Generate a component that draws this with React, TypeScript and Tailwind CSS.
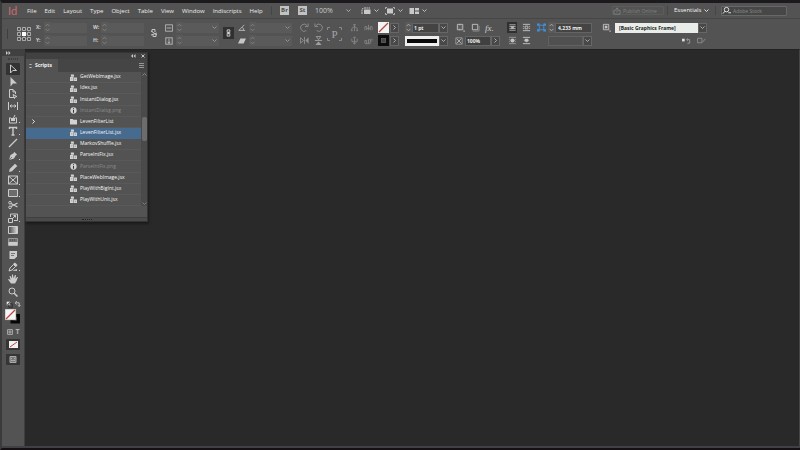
import React, { ReactNode } from "react";

const FONT = "font-['Open_Sans','Noto_Sans',sans-serif]";

function Icon({ children, className = "size-[10px]", box = "0 0 10 10" }: { children: ReactNode; className?: string; box?: string }) {
  return (
    <svg viewBox={box} className={"shrink-0 " + className} fill="none" stroke="currentColor" strokeWidth="1" aria-hidden="true">
      {children}
    </svg>
  );
}

function Chevron({ right = false, className = "size-[5px]" }: { right?: boolean; className?: string }) {
  return (
    <Icon box="0 0 5 5" className={className}>
      {right ? <path d="M1.500 .5l2 2-2 2" strokeWidth=".9" /> : <path d="M.5 1.500l2 2 2-2" strokeWidth=".9" />}
    </Icon>
  );
}

function Spinner({ bright = false }: { bright?: boolean }) {
  return (
    <span className={"flex h-[11px] w-[7px] shrink-0 items-center justify-center rounded-[1px] bg-[#5a5a5a] " + (bright ? "text-[#b0b0b0]" : "text-[#858585]")}>
      <Icon box="0 0 5 9" className="h-[9px] w-[5px]">
        <path d="M.5 3.200l2-2 2 2M.5 5.800l2 2 2-2" strokeWidth=".9" />
      </Icon>
    </span>
  );
}

function Field({ label, text }: { label: string; text: string }) {
  return (
    <label className="flex h-[11px] items-center">
      <span className="w-2 text-[5px] font-bold text-[#d0d0d0]">{text}</span>
      <Spinner />
      <input aria-label={label} className="h-[10px] w-[36px] bg-[#5a5a5a]" />
    </label>
  );
}

function Combo({ label, icon }: { label: string; icon: ReactNode }) {
  return (
    <div className="flex h-[11px] items-center">
      <span className="mr-[2px] flex w-[9px] text-[#c6c6c6]">{icon}</span>
      <Spinner />
      <input aria-label={label} className="h-[10px] w-[27px] bg-[#5a5a5a]" />
      <button aria-label={label + " presets"} className="flex h-[10px] w-[9px] items-center justify-center bg-[#5a5a5a] text-[#989898]">
        <Chevron />
      </button>
    </div>
  );
}

function DropButton({ label, right = false }: { label: string; right?: boolean }) {
  return (
    <button aria-label={label} className="flex h-[10px] w-[9px] shrink-0 items-center justify-center border border-[#676767] bg-[#484848] text-[#b8b8b8]">
      <Chevron right={right} />
    </button>
  );
}

function ToolButton({ label, children, className = "text-[#c4c4c4]" }: { label: string; children: ReactNode; className?: string }) {
  return (
    <button aria-label={label} className={"flex h-[11px] w-[10px] items-center justify-center " + className}>
      <Icon className="size-[9px]">{children}</Icon>
    </button>
  );
}

function Stack({ children, className }: { children: ReactNode; className: string }) {
  return <div className={"flex shrink-0 flex-col gap-[2px] " + className}>{children}</div>;
}

const menus = ["File", "Edit", "Layout", "Type", "Object", "Table", "View", "Window", "Indiscripts", "Help"];

function MenuBar() {
  return (
    <header className="flex h-4 items-center border-b border-[#464646] text-[6px] leading-[10px] text-[#ececec]">
      <span className="ml-[6px] w-[19px] shrink-0 font-['Lato',sans-serif] text-[11px] leading-[12px] text-[#d0696d]">Id</span>
      <nav className="flex w-[248px] shrink-0 gap-2">
        {menus.map((m) => (
          <button key={m} className="whitespace-nowrap">{m}</button>
        ))}
      </nav>
      <span className="-ml-1 h-[9px] w-px shrink-0 bg-[#454545]" />
      <button aria-label="Bridge" className="ml-2 h-[9px] w-[9px] shrink-0 bg-[#c2c2c2] text-[6px] font-bold leading-[9px] text-[#4c4c4c]">Br</button>
      <button aria-label="Stock" className="ml-[9px] h-[9px] w-[9px] shrink-0 bg-[#c2c2c2] text-[6px] font-bold leading-[9px] text-[#4c4c4c]">St</button>
      <div className="ml-2 flex w-[36px] shrink-0 items-center text-[#b5b5b5]">
        <select aria-label="Zoom level" className="w-[31px] appearance-none text-[7px] leading-[10px] text-[#cccccc]"><option>100%</option></select>
        <Chevron />
      </div>
      <div className="ml-[10px] flex shrink-0 items-center gap-[6px] text-[#c9c9c9]">
        <button aria-label="View options" className="flex items-center gap-[3px]">
          <Icon box="0 0 10 8" className="h-2 w-[10px]"><path d="M1 7V3l1-2M3 1h6" strokeDasharray="2 .5" /><path d="M3 2.500h6.500V7H3z" fill="currentColor" stroke="none" /></Icon>
          <Chevron />
        </button>
        <button aria-label="Screen mode" className="flex items-center gap-[3px]">
          <Icon box="0 0 10 8" className="h-2 w-[10px]"><path d="M2 1.500h6v5H2z" fill="currentColor" stroke="none" /><path d="M.5 2V.5H2M8 .5h1.500V2M.5 6v1.500H2M8 7.500h1.500V6" strokeWidth=".8" /></Icon>
          <Chevron />
        </button>
        <button aria-label="Arrange documents" className="flex items-center gap-[3px]">
          <Icon box="0 0 10 8" className="h-2 w-[10px]"><path d="M.5 1H5v6H.5zM6 1h4v2.500H6zM6 4.500h4V7H6z" fill="currentColor" stroke="none" /></Icon>
          <Chevron />
        </button>
      </div>
      <div className="ml-auto flex shrink-0 items-center">
        <button className="flex h-[9px] w-[52px] items-center gap-[2px] rounded-[1px] border border-[#5d5d5d] text-[#808080]">
          <Icon box="0 0 9 9" className="size-2"><path d="M3 4H1v4h7V4H6M4.500 6V1M2.500 3l2-2 2 2" /></Icon>
          <span className="whitespace-nowrap text-[5px]">Publish Online</span>
        </button>
        <span className="ml-[3px] h-[9px] w-px bg-[#454545]" />
        <div className="ml-[6px] flex w-[35px] items-center">
          <select aria-label="Workspace" className="w-[30px] appearance-none text-[6px] leading-[9px] text-[#f4f4f4]"><option>Essentials</option></select>
          <Chevron />
        </div>
        <span className="ml-[6px] h-[9px] w-px bg-[#454545]" />
        <label className="ml-[5px] mr-[13px] flex h-[10px] w-[66px] items-center gap-[2px] rounded-[1px] border border-[#686868] bg-[#474747]">
          <Icon className="size-[9px]"><circle cx="5" cy="4" r="2.500" /><path d="M3.300 5.800L1 8.500M7 7.500h3" /></Icon>
          <input aria-label="Search Adobe Stock" placeholder="Adobe Stock" className="w-[50px] text-[5px] leading-[8px] placeholder:text-[#8a8a8a]" />
        </label>
      </div>
    </header>
  );
}

function ControlBar() {
  return (
    <div className="flex h-[30px] items-start pt-[3px] text-[#c4c4c4]">
      <span className="ml-[5px] mt-[7px] h-[10px] w-px shrink-0 bg-[#3f3f3f]" />
      <button aria-label="Reference point" className="ml-[9px] mt-[5px] h-[14px] w-[14px] shrink-0">
        <Icon box="0 0 14 14" className="size-[14px]">
          <path d="M2.500 2.500h9v9h-9zM7 1v12M1 7h12" stroke="#8d8d8d" strokeDasharray="1 1" />
          <g stroke="#c0c0c0" strokeWidth=".8" fill="#505050">
            {[2, 7, 12].map((x) => [2, 7, 12].map((y) => <rect key={x + "-" + y} x={x - 1.4} y={y - 1.4} width="2.800" height="2.800" />))}
          </g>
          <path d="M5 5h4v4H5z" fill="#fff" stroke="none" />
        </Icon>
      </button>
      <Stack className="ml-[5px] w-[51px]">
        <Field label="X position" text="X:" />
        <Field label="Y position" text="Y:" />
      </Stack>
      <Stack className="ml-[6px] w-[51px]">
        <Field label="Width" text="W:" />
        <Field label="Height" text="H:" />
      </Stack>
      <button aria-label="Link dimensions" className="ml-[6px] mt-[5px] flex h-3 w-[8px] shrink-0 items-center justify-center">
        <Icon box="0 0 8 10" className="h-[10px] w-2"><path d="M2 4V1.500h3V4M3 6v2.500h3V6M1 3l6 4M1 7l6-2" /></Icon>
      </button>
      <Stack className="ml-[7px] w-[54px]">
        <Combo label="Scale X" icon={<Icon className="size-2"><path d="M.5 9V1h9v8M2 5h6M.5 9h9" /></Icon>} />
        <Combo label="Scale Y" icon={<Icon className="size-2"><path d="M.5 1h9M.5 9h9M1 1v8M9 1v8M5 2v6M3.500 6L5 8l1.500-2" /></Icon>} />
      </Stack>
      <button aria-label="Constrain scale" className="ml-[4px] mt-[5px] flex h-3 w-[11px] shrink-0 items-center justify-center bg-[#303030] text-[#d5d5d5]">
        <Icon box="0 0 5 9" className="h-2 w-[5px]"><path d="M1 1h3v3H1zM1 5h3v3H1zM2.500 3v3" /></Icon>
      </button>
      <Stack className="ml-[4px] w-[54px]">
        <Combo label="Rotation" icon={<Icon className="size-2"><path d="M8 1L1 8h8M5 4q2 1 2 4" /></Icon>} />
        <Combo label="Shear" icon={<Icon className="size-2"><path d="M3 2h7L7 8H0z" fill="currentColor" stroke="none" /></Icon>} />
      </Stack>
      <div className="ml-[7px] grid shrink-0 grid-cols-2 gap-x-[4px] gap-y-[2px]">
        <ToolButton label="Rotate clockwise" className="text-[#909090]"><path d="M7 8.500A4 4 0 1 1 8 3M9 .5V4H5.500" /></ToolButton>
        <ToolButton label="Rotate counterclockwise" className="text-[#909090]"><path d="M3 8.500A4 4 0 1 0 2 3M1 .5V4h3.500" /></ToolButton>
        <ToolButton label="Flip horizontal" className="text-[#909090]"><path d="M.5 2v6L4 5zM5 1v8" /><path d="M9.500 1.500v7L6 5z" fill="currentColor" stroke="none" /></ToolButton>
        <ToolButton label="Flip vertical" className="text-[#a0a0a0]"><path d="M2.500 .5h5L5 4zM1 5h8" /><path d="M1.500 10h7L5 6z" fill="currentColor" stroke="none" /></ToolButton>
      </div>
      <button aria-label="Paragraph container" className="relative ml-[4px] mt-[5px] flex h-[14px] w-[15px] shrink-0 items-center justify-center font-['Liberation_Serif',serif] text-[11px] leading-[12px] text-[#a5a5a5]">
        <Icon box="0 0 15 14" className="absolute inset-0 h-[14px] w-[15px]"><path d="M.5 3V.5H3M12 .5h2.500V3M.5 11v2.500H3M12 13.500h2.500V11" stroke="#8a8a8a" /></Icon>
        P
      </button>
      <div className="ml-[7px] grid shrink-0 grid-cols-2 gap-x-[4px] gap-y-[2px]">
        <ToolButton label="Select container" className="text-[#858585]"><path d="M5 1v8M5 4L2 6v3M5 4l3 2v3M3.500 2h3M1 8.500h2M7 8.500h2" /></ToolButton>
        <ToolButton label="Select previous" className="text-[#858585]"><path d="M1 8V4h2v4M5 2v6M7 8V4h2v4M3 6h4" /></ToolButton>
        <ToolButton label="Select content" className="text-[#858585]"><path d="M5 1v8M3 7l2 2 2-2M2 3v3h6V3M3.500 1.500h3" /></ToolButton>
        <ToolButton label="Select next" className="text-[#858585]"><path d="M1 8V5h2v3M5 8V4h2v4M8 3l1.500 1.500L8 6M1 8.500h6" /></ToolButton>
      </div>
      <Stack className="ml-[5px] w-[21px]">
        <div className="flex h-[11px] items-center gap-px">
          <button aria-label="Fill" className="size-[11px]"><Icon box="0 0 11 11" className="size-[11px]"><path d="M0 0h11v11H0z" fill="#f3f3f3" stroke="none" /><path d="M1 10L10 1" stroke="#b8463f" strokeWidth="1.300" /></Icon></button>
          <DropButton label="Fill swatches" right />
        </div>
        <div className="flex h-[11px] items-center gap-px">
          <button aria-label="Stroke" className="flex size-[11px] items-center justify-center bg-[#0c0c0c]"><span className="size-[5px] border border-[#555555] bg-[#444444]" /></button>
          <DropButton label="Stroke swatches" right />
        </div>
      </Stack>
      <Stack className="ml-[6px] w-[43px]">
        <div className="flex h-[11px] items-center">
          <Spinner bright />
          <input aria-label="Stroke weight" defaultValue="1 pt" className="h-[10px] w-[27px] border border-[#646464] bg-[#444444] pl-px text-[5px] font-bold text-[#eeeeee]" />
          <DropButton label="Weight presets" />
        </div>
        <div className="flex h-[11px] items-center">
          <button aria-label="Stroke type" className="flex h-[10px] w-[34px] items-center bg-[#eeeeee] px-[2px]"><span className="h-[4px] w-full bg-[#080808]" /></button>
          <DropButton label="Stroke types" />
        </div>
      </Stack>
      <Stack className="ml-[7px] w-[45px]">
        <div className="flex h-[11px] items-center gap-[5px]">
          <ToolButton label="Object effects target"><path d="M1.500 1.500h6v6h-6zM4 1v1M4 7v1M8 9h2" /><path d="M3 3h3v3H3z" stroke="#707070" /></ToolButton>
          <ToolButton label="Drop shadow"><path d="M1.500 1.500h6v6h-6z" /><path d="M2 9h7V3" stroke="#8d8d8d" /></ToolButton>
          <button aria-label="Effects" className="font-['Liberation_Serif',serif] text-[9px] italic leading-[10px] text-[#d0d0d0]">fx.</button>
        </div>
        <div className="flex h-[11px] items-center">
          <span className="w-[10px] shrink-0"><Icon className="size-2"><path d="M1 1h8v8H1z" stroke="#a0a0a0" /><path d="M2 2l6 6M8 2L2 8" /></Icon></span>
          <input aria-label="Opacity" defaultValue="100%" className="h-[10px] w-[26px] shrink-0 border border-[#646464] bg-[#404040] pl-px text-[5px] font-bold text-[#eeeeee]" />
          <DropButton label="Opacity slider" right />
        </div>
      </Stack>
      <div className="ml-[7px] grid shrink-0 grid-cols-2 gap-x-[4px] gap-y-[2px]">
        <ToolButton label="No text wrap" className="bg-[#303030] text-[#b5b5b5]"><path d="M1.500 2h7M1.500 8h7M1.500 4h7M1.500 6h7" /><path d="M3.500 3.500h3v3h-3z" fill="currentColor" stroke="none" /></ToolButton>
        <ToolButton label="Wrap around bounding box"><path d="M1 1.500h8M1 8.500h8M1 4h1M1 6h1M8 4h1M8 6h1M3.500 3.500h3v3h-3z" /></ToolButton>
        <ToolButton label="Wrap around shape"><path d="M1 1.500h8M1 8.500h8M1 4h1M1 6h1M8 4h1M8 6h1" stroke="#999" /><circle cx="5" cy="5" r="2.300" fill="currentColor" stroke="none" /></ToolButton>
        <ToolButton label="Jump object"><path d="M1 1.500h8M1 8.500h8" /><path d="M3 3h4v2h1.500L5 7 1.500 5H3z" fill="currentColor" stroke="none" /></ToolButton>
      </div>
      <Stack className="ml-[6px] w-[55px]">
        <div className="flex h-[11px] items-center">
          <span className="w-[11px] text-[#3f91dd]"><Icon className="size-[9px]"><path d="M2.500 2.500h5v5h-5z" /><path d="M0 .5h3v2.500H0zM7 .5h3V3H7zM0 7h3v2.500H0zM7 7h3v2.500H7z" fill="currentColor" stroke="none" /></Icon></span>
          <Spinner bright />
          <input aria-label="Corner size" defaultValue="4,233 mm" className="h-[10px] w-[37px] border border-[#646464] bg-[#444444] pl-[2px] text-[5px] font-bold text-[#eeeeee]" />
        </div>
        <div className="flex h-[11px] items-center pl-[11px]">
          <input aria-label="Corner shape" className="h-[10px] w-[35px] border border-[#616161] bg-[#505050]" />
          <DropButton label="Corner shapes" />
        </div>
      </Stack>
      <Stack className="ml-[9px]">
        <div className="flex h-[11px] items-center">
          <ToolButton label="Clear overrides"><path d="M1.500 1.500h6v6h-6zM8 9h2" /><path d="M3 3h3v3H3z" fill="currentColor" stroke="none" /></ToolButton>
          <select aria-label="Object style" className="ml-[4px] h-[10px] w-[83px] appearance-none bg-[#e9ede9] pl-[4px] text-[5px] font-bold leading-[10px] text-[#222222]"><option>[Basic Graphics Frame]</option></select>
          <DropButton label="Object styles" />
        </div>
        <div className="flex h-[11px] items-center gap-[5px] pl-20">
          <ToolButton label="Undo style" className="text-[#9a9a9a]"><path d="M0 3h3v3H0z" fill="#dddddd" stroke="none" /><path d="M5.500 4h3v4H6M6.500 2.500L5 4l1.500 1.500" /></ToolButton>
          <ToolButton label="Edit style" className="text-[#8d8d8d]"><path d="M.5 2.500h5v5h-5zM6 7l3.500-4" /></ToolButton>
        </div>
      </Stack>
    </div>
  );
}

const tools: { name: string; more?: boolean; art: ReactNode }[] = [
  { name: "Selection", art: <path d="M2.500 1v8l2.300-2.500H8.500z" /> },
  { name: "Direct selection", art: <path d="M2.500 0v9.500l2.500-3H9z" fill="currentColor" stroke="none" /> },
  { name: "Page", art: <path d="M6.500 8.500h-5v-8H5L7.500 3v2M5 .5V3h2.500M5 5.500l4 2-2 .5-.5 1.500z" /> },
  { name: "Gap", art: <path d="M.5 1v8M9.500 1v8M2 5h6M3.500 3.500L2 5l1.500 1.500M6.500 3.500L8 5 6.500 6.500" /> },
  { name: "Content collector", more: true, art: <><path d="M1.500 4v5h7V4M1 4h2M7 4h2M5 5L7 1" /><path d="M3 4h4v3H3z" fill="currentColor" stroke="none" /></> },
  { name: "Type", more: true, art: <path d="M1.500 3V1.500h7V3M5 1.500V9M3.500 9h3" strokeWidth="1.400" /> },
  { name: "Line", art: <path d="M1 9l8-8" strokeWidth="1.200" /> },
  { name: "Pen", more: true, art: <><path d="M1 9l1.500-5L6 2l2 2-2 3.500zM6.500 1l2.500 2.500L8 4.500 5.500 2z" fill="currentColor" stroke="none" /><path d="M1 9l3-3" stroke="#535353" strokeWidth=".7" /></> },
  { name: "Pencil", more: true, art: <path d="M1 9l.7-3L7 .7 9.300 3 4 8.300z" fill="currentColor" stroke="none" /> },
  { name: "Rectangle frame", more: true, art: <path d="M.5 1h9v8h-9zM.5 1l9 8M9.500 1l-9 8" /> },
  { name: "Rectangle", more: true, art: <path d="M.5 1.500h9v7h-9z" fill="#6c6c6c" /> },
  { name: "Scissors", art: <><path d="M3 3.500l6.500 3.500M3 6.500L9.500 3" strokeWidth="1.300" /><circle cx="2" cy="2.700" r="1.300" /><circle cx="2" cy="7.300" r="1.300" /></> },
  { name: "Free transform", more: true, art: <path d="M.5 5.500h4v4h-4zM2.500 4V1h7v6.500H6M4 6l3.500-3.500M5.500 2.500h2v2" /> },
  { name: "Gradient swatch", art: <><defs><linearGradient id="swatchFade"><stop stopColor="#444" /><stop offset="1" stopColor="#ddd" /></linearGradient></defs><path d="M.5 1.500h9v7h-9z" fill="url(#swatchFade)" /></> },
  { name: "Gradient feather", art: <><path d="M.5 1.500h9v7h-9z" fill="#727272" stroke="#999" /><path d="M.5 5h9v3.500h-9z" fill="currentColor" stroke="none" /><path d="M2 3h1M4 3h1M6 3h1" stroke="#444" /></> },
  { name: "Note", art: <><path d="M1.500 1h7.500v5.500L6.500 9h-5z" fill="currentColor" stroke="none" /><path d="M3 3.500h4M3 5.500h3" stroke="#777" /></> },
  { name: "Color theme", more: true, art: <><path d="M1 9l1-3 3.500-3.500 2 2L4 8z" /><path d="M5 2l2-1.500L9.500 3 8 5zM4 8.500l5-1.500v2z" fill="currentColor" stroke="none" /></> },
  { name: "Hand", art: <path d="M3 9.500L0 5.500l1-.5L2.500 6 1.500 2h1l1.200 2.500L4 .5h1l.5 3.800L7 1h1L7.500 5 9 3h1L8.500 7 7 9.500z" fill="currentColor" stroke="none" /> },
  { name: "Zoom", art: <><circle cx="4" cy="4" r="3" /><path d="M6.200 6.200L9.500 9.500" strokeWidth="1.500" /></> },
];

function Toolbar() {
  return (
    <aside className="flex w-[23px] shrink-0 flex-col items-center border-r border-[#3e3e3e] bg-[#535353] text-[#cbcbcb]">
      <div className="flex h-[7px] w-full items-center bg-[#404040] pl-[4px]">
        <Icon box="0 0 5 4" className="h-1 w-[5px]"><path d="M0 0l2 2-2 2zM2.500 0l2 2-2 2z" fill="currentColor" stroke="none" /></Icon>
      </div>
      <span className="mt-[2px] h-[2px] w-[10px] border-y border-dotted border-[#3e3e3e]" />
      <div className="mt-[3px] grid h-[235px] w-[14px] auto-rows-fr">
        {tools.map((t, i) => (
          <button key={t.name} aria-label={t.name} className={"relative flex items-center justify-center " + (i === 0 ? "rounded-[1px] bg-[#333333]" : "")}>
            <Icon>{t.art}</Icon>
            {t.more && <span className="absolute bottom-[2px] right-0 size-px bg-[#cbcbcb]" />}
          </button>
        ))}
      </div>
      <div className="mt-[3px] flex w-[15px] justify-between">
        <Icon className="size-[7px]"><path d="M1 1h5v5H1z" fill="#eee" stroke="none" /><path d="M4 4h5v5H4zM1 6l5-5" stroke="#222" /></Icon>
        <Icon className="size-[6px]"><path d="M1 3h6v6M3 0L0 3l3 3M5 7l2 2 2-2" strokeWidth="1.500" /></Icon>
      </div>
      <button aria-label="Fill and stroke" className="mt-px h-[16px] w-[16px] shrink-0">
        <Icon box="0 0 16 16" className="size-4">
          <path d="M7 6.500h6.500v6.500H7z" stroke="#060606" strokeWidth="3" fill="#444" />
          <path d="M0 0h11v11H0z" fill="#f5f5f5" stroke="#777" strokeWidth=".5" />
          <path d="M1 10l9-9" stroke="#c2433d" strokeWidth="1.300" />
        </Icon>
      </button>
      <div className="mt-[3px] flex h-2 w-[13px] items-center justify-between text-[#b4b4b4]">
        <Icon className="size-[6px]"><path d="M1 1h8v8H1zM3.500 3.500h3v3h-3z" strokeWidth="1.500" /></Icon>
        <span className="text-[7px] font-bold leading-[8px]">T</span>
      </div>
      <button aria-label="Apply none" className="mt-[3px] flex h-[11px] w-[14px] items-center justify-center bg-[#363636]">
        <Icon box="0 0 9 7" className="h-[7px] w-[9px]"><path d="M0 0h9v7H0z" fill="#f0f0f0" stroke="none" /><path d="M1 6l7-5" stroke="#c2433d" /></Icon>
      </button>
      <button aria-label="Screen mode" className="mt-[4px] flex h-[11px] w-[14px] items-center justify-center bg-[#363636] text-[#aaaaaa]">
        <Icon box="0 0 8 7" className="h-[7px] w-2"><path d="M1 .5h6v6H1z" fill="#777" /><path d="M2 2.500h1M5 2.500h1M2 4.500h4" /></Icon>
      </button>
    </aside>
  );
}

type Entry = { name: string; kind: "script" | "image" | "folder"; selected?: boolean };
const entries: Entry[] = [
  { name: "GetWebImage.jsx", kind: "script" },
  { name: "Idex.jsx", kind: "script" },
  { name: "InstantDialog.jsx", kind: "script" },
  { name: "InstantDialog.png", kind: "image" },
  { name: "LevenFilterList", kind: "folder" },
  { name: "LevenFilterList.jsx", kind: "script", selected: true },
  { name: "MarkovShuffle.jsx", kind: "script" },
  { name: "ParseIntFix.jsx", kind: "script" },
  { name: "ParseIntFix.png", kind: "image" },
  { name: "PlaceWebImage.jsx", kind: "script" },
  { name: "PlayWithBigInt.jsx", kind: "script" },
  { name: "PlayWithUnit.jsx", kind: "script" },
];

function EntryIcon({ kind }: { kind: Entry["kind"] }) {
  return (
    <Icon box="0 0 8 8" className="size-[7px] text-[#d2d2d2]">
      {kind === "folder" && <path d="M0 1h3l1 1h4v5.500H0z" fill="currentColor" stroke="none" />}
      {kind === "image" && <><circle cx="4" cy="4" r="3.600" fill="currentColor" stroke="none" /><path d="M4 1.500v1.200M4 3.500v3" stroke="#333" strokeWidth="1.200" /></>}
      {kind === "script" && <><path d="M1 .5h3.500V3H1zM0 3.500h4V8H0zM4.500 4H8v4H4.500z" fill="currentColor" stroke="none" /><path d="M1.500 5.500h1M5.500 6h1.500" stroke="#777" strokeWidth=".8" /></>}
    </Icon>
  );
}

function ScriptsPanel() {
  return (
    <section aria-label="Scripts" className="absolute left-0 top-[2px] flex w-[123px] flex-col border border-[#343434] bg-[#535353] shadow-[1px_2px_2px_#1b1b1b]">
      <div className="flex h-[6px] items-center justify-end gap-[5px] bg-[#414141] pr-[2px] text-[#c5c5c5]">
        <button aria-label="Collapse" className="flex"><Icon box="0 0 5 4" className="h-1 w-[5px]"><path d="M2 0L0 2l2 2zM4.500 0l-2 2 2 2z" fill="currentColor" stroke="none" /></Icon></button>
        <button aria-label="Close" className="flex"><Icon box="0 0 4 4" className="size-1"><path d="M.5.5l3 3M3.500.5l-3 3" /></Icon></button>
      </div>
      <div className="flex h-[13px] items-center justify-between bg-[#454545] pr-[3px]">
        <button className="flex h-full w-[32px] items-center gap-[3px] bg-[#535353] pl-[3px] text-[5px] font-bold text-[#f4f4f4]">
          <Icon box="0 0 3 6" className="h-[6px] w-[3px]"><path d="M.5 2l1-1 1 1M.5 4l1 1 1-1" strokeWidth=".8" /></Icon>
          Scripts
        </button>
        <button aria-label="Panel menu" className="flex h-[5px] w-[5px] flex-col justify-between">
          <span className="h-px w-full bg-[#969696]" /><span className="h-px w-full bg-[#969696]" /><span className="h-px w-full bg-[#969696]" />
        </button>
      </div>
      <div className="flex h-[134px]">
        <ul className="grid flex-1 auto-rows-fr text-[5px] font-medium text-[#f6f6f6]">
          {entries.map((e) => (
            <li key={e.name} className={"flex items-center border-b pl-[5px] " + (e.selected ? "border-[#476b8e] bg-[#476b8e]" : "border-[#595959]")}>
              <span className="flex w-[39px]">{e.kind === "folder" && <Chevron right />}</span>
              <EntryIcon kind={e.kind} />
              <span className={"ml-[3px] whitespace-nowrap " + (e.kind === "image" ? "text-[#8a8a8a]" : "")}>{e.name}</span>
            </li>
          ))}
        </ul>
        <div className="flex w-[6px] flex-col items-center justify-between bg-[#4a4a4a] text-[#828282]">
          <Icon box="0 0 5 5" className="size-[5px]"><path d="M.5 3.500l2-2 2 2" /></Icon>
          <span className="mb-5 h-6 w-[5px] rounded-[2px] bg-[#6c6c6c]" />
          <Chevron />
        </div>
      </div>
      <div className="mt-[11px] flex h-[4px] items-center justify-center border-t border-[#404040] bg-[#4b4b4b]">
        <span className="h-px w-[10px] border-t border-dotted border-[#252525]" />
      </div>
    </section>
  );
}

export default function App() {
  return (
    <div className={"flex h-screen flex-col overflow-hidden border-b-2 border-l-2 border-t-[3px] border-b-[#141014] border-l-[#3b3b3b] border-t-[#1d1a1d] bg-[#535353] " + FONT}>
      <MenuBar />
      <ControlBar />
      <div className="flex min-h-0 flex-1 border-b-2 border-[#414045]">
        <Toolbar />
        <main className="relative min-w-0 flex-1 border-r border-t border-r-[#454545] border-t-[#222222] bg-[#292929]">
          <ScriptsPanel />
        </main>
      </div>
    </div>
  );
}
